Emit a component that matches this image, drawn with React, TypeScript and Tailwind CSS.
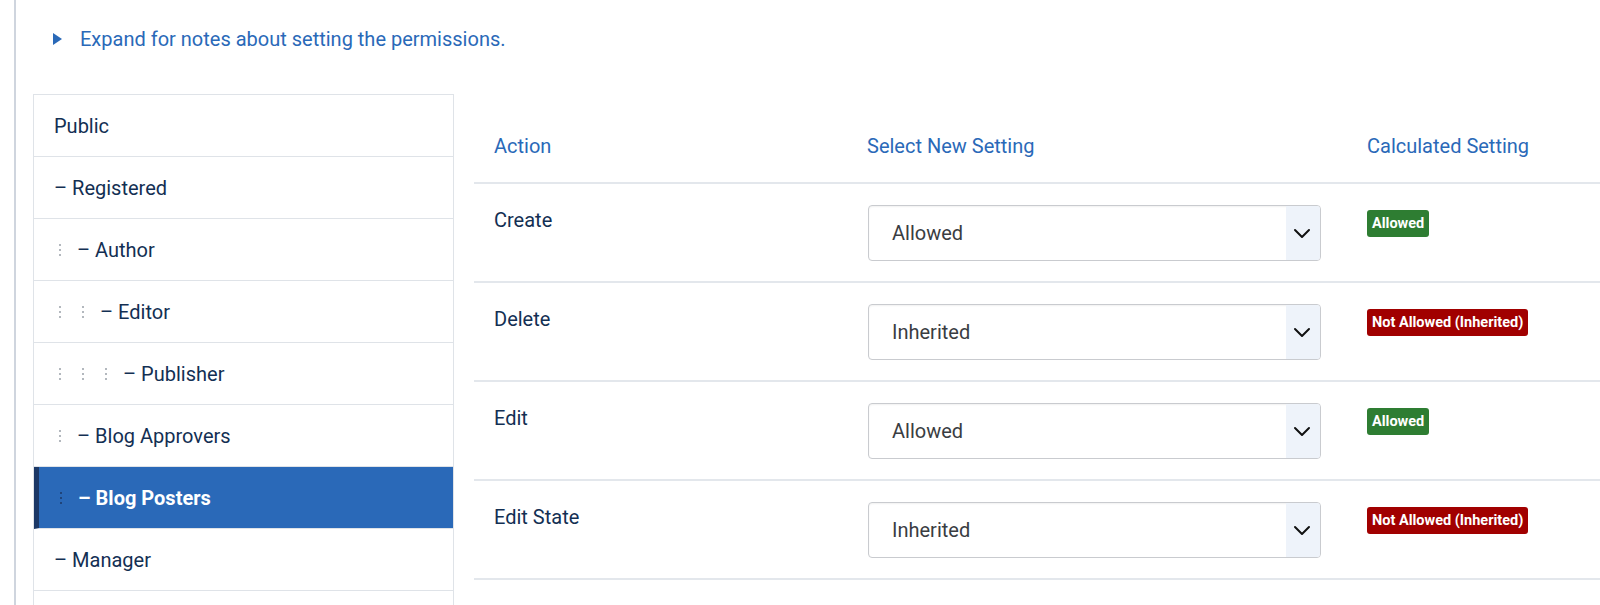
import React from "react";

const groups = [
  { name: "Public", level: 0, dash: false },
  { name: "Registered", level: 0, dash: true },
  { name: "Author", level: 1, dash: true },
  { name: "Editor", level: 2, dash: true },
  { name: "Publisher", level: 3, dash: true },
  { name: "Blog Approvers", level: 1, dash: true },
  { name: "Blog Posters", level: 1, dash: true, active: true },
  { name: "Manager", level: 0, dash: true },
];

const actions = [
  { name: "Create", setting: "Allowed", calc: "Allowed", ok: true },
  { name: "Delete", setting: "Inherited", calc: "Not Allowed (Inherited)", ok: false },
  { name: "Edit", setting: "Allowed", calc: "Allowed", ok: true },
  { name: "Edit State", setting: "Inherited", calc: "Not Allowed (Inherited)", ok: false },
];

function Dots({ active }: { active?: boolean }) {
  return (
    <span className="inline-flex w-[23px] shrink-0">
      <svg width="6" height="14" viewBox="0 0 6 14" className="ml-[3px]">
        <circle cx="3" cy="2" r="1" fill={active ? "#1c3866" : "#9aa0a8"} />
        <circle cx="3" cy="7" r="1" fill={active ? "#1c3866" : "#9aa0a8"} />
        <circle cx="3" cy="12" r="1" fill={active ? "#1c3866" : "#9aa0a8"} />
      </svg>
    </span>
  );
}

function Chevron() {
  return (
    <svg width="18" height="11" viewBox="0 0 18 11" fill="none">
      <path d="M2 2l7 7 7-7" stroke="#111" strokeWidth="2" strokeLinecap="round" strokeLinejoin="round" />
    </svg>
  );
}

export default function App() {
  return (
    <div className="h-[605px] w-full overflow-hidden bg-white font-['Roboto',sans-serif]">
      <div className="ml-[14px] h-full border-l-2 border-[#cfd5de] pl-[17px]">
        {/* Notes toggle */}
        <div className="flex h-[94px] items-start pt-[24px]">
          <div className="flex items-center text-[20px] leading-[30px] text-[#2a69b8]">
            <svg width="10" height="12" viewBox="0 0 10 12" className="ml-[20px] mr-[17px]">
              <path d="M0 0l9 6-9 6z" fill="#2a69b8" />
            </svg>
            <span>Expand for notes about setting the permissions.</span>
          </div>
        </div>

        <div className="flex gap-[20px]">
          {/* Groups list */}
          <div className="h-[520px] w-[421px] shrink-0 border border-[#dfe3e8]">
            {groups.map((g) => (
              <div
                key={g.name}
                className={`flex h-[62px] items-center border-b border-[#dfe3e8] text-[20px] ${
                  g.active
                    ? "border-l-[5px] border-l-[#1c3866] bg-[#2a69b8] pl-[16px] font-bold text-white"
                    : "pl-[20px] text-[#132f53]"
                }`}
              >
                {Array.from({ length: g.level }).map((_, i) => (
                  <Dots key={i} active={g.active} />
                ))}
                <span>{g.dash ? `– ${g.name}` : g.name}</span>
              </div>
            ))}
          </div>

          {/* Permissions table */}
          <div className="flex-1 text-[20px]">
            <div className="flex h-[90px] items-end border-b-2 border-[#e3e7ec] pb-[21px] leading-[30px] text-[#2a69b8]">
              <div className="w-[373px] pl-[20px]">Action</div>
              <div className="w-[500px] pl-[20px]">Select New Setting</div>
              <div className="pl-[20px]">Calculated Setting</div>
            </div>
            {actions.map((a) => (
              <div key={a.name} className="flex h-[99px] items-start border-b-2 border-[#e3e7ec]">
                <div className="w-[373px] pl-[20px] pt-[21px] leading-[30px] text-[#132f53]">{a.name}</div>
                <div className="w-[500px] pl-[21px] pt-[21px]">
                  <div className="flex h-[56px] w-[453px] items-center overflow-hidden rounded-[4px] border border-[#c9cbcf] shadow-[inset_0_1px_2px_rgba(0,0,0,0.06)]">
                    <span className="flex-1 pl-[23px] text-[#3a3d42]">{a.setting}</span>
                    <span className="flex h-full w-[34px] items-center justify-center bg-[#eef3fa] pr-[2px]">
                      <Chevron />
                    </span>
                  </div>
                </div>
                <div className="pl-[20px] pt-[22px]">
                  <span
                    className={`inline-block rounded-[3px] px-[5px] py-[4px] text-[14.5px] font-bold leading-[19px] text-white ${
                      a.ok ? "bg-[#2e7d32]" : "bg-[#a10000]"
                    }`}
                  >
                    {a.calc}
                  </span>
                </div>
              </div>
            ))}
          </div>
        </div>
      </div>
    </div>
  );
}
